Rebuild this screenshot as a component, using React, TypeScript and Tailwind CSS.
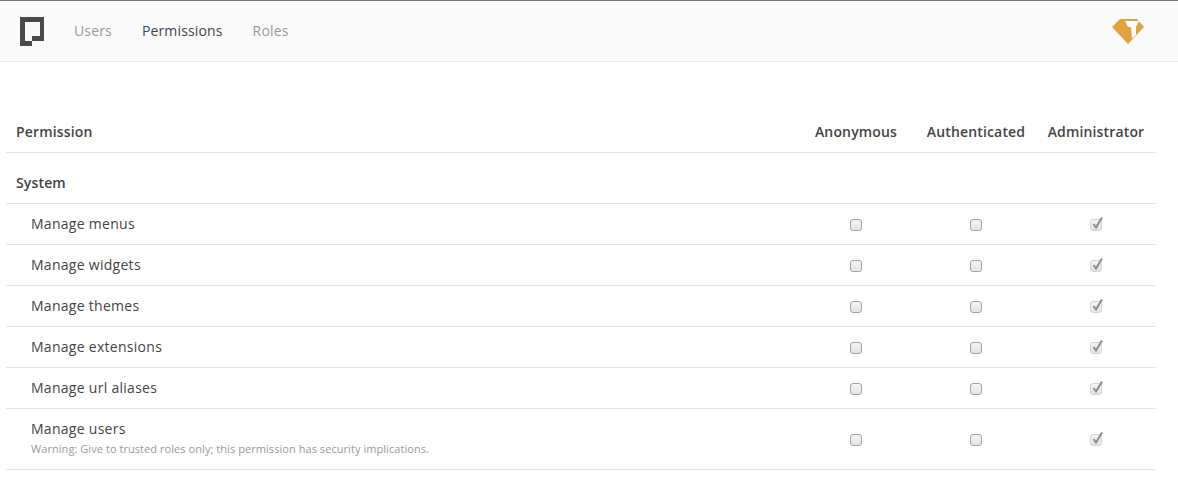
const rows = [
  { name: 'Manage menus' },
  { name: 'Manage widgets' },
  { name: 'Manage themes' },
  { name: 'Manage extensions' },
  { name: 'Manage url aliases' },
  {
    name: 'Manage users',
    note: 'Warning: Give to trusted roles only; this permission has security implications.',
  },
];

const Logo = () => (
  <svg width="24" height="29" viewBox="0 0 24 29">
    <path
      fillRule="evenodd"
      fill="#4a4a4a"
      d="M0 0H24V24H12V29H0ZM5 5V24H12V19H20V5Z"
    />
  </svg>
);

const Gem = () => (
  <svg width="32" height="26" viewBox="0 0 32 26">
    <path fill="#e1a23f" d="M8 1H25L32 9L16 26L0 9Z" />
    <path fill="#fff" d="M13 3H27L24 9V17L20 20.500L19 9H16Z" />
  </svg>
);

const Checkbox = ({ checked }: { checked?: boolean }) => (
  <span
    className={`relative block w-3 h-3 rounded-[3px] border bg-gradient-to-b from-[#f4f4f4] to-[#e4e4e4] ${
      checked ? 'border-[#d4d4d4]' : 'border-[#a3a3a3]'
    }`}
  >
    {checked && (
      <svg className="absolute left-[-1px] top-[-4px]" width="14" height="14" viewBox="0 0 14 14">
        <path d="M3.500 8L6 11.500L12 1.500" fill="none" stroke="#8c8c8c" strokeWidth="2" />
      </svg>
    )}
  </span>
);

const App = () => {
  return (
    <div className="min-h-[480px] bg-white text-sm text-[#444] font-['Open_Sans',sans-serif] overflow-hidden">
      <header className="h-[62px] flex items-center bg-[#fafafa] border-t border-t-[#777] border-b border-b-[#e8e8e8] pl-5 pr-[34px]">
        <Logo />
        <nav className="flex gap-[30px] ml-[30px] text-[#999] tracking-[0.15px]">
          <span>Users</span>
          <span className="text-[#3d4650]">Permissions</span>
          <span>Roles</span>
        </nav>
        <div className="ml-auto">
          <Gem />
        </div>
      </header>

      <main className="w-[1150px] ml-1.5 mt-[49px]">
        <div className="grid grid-cols-[1fr_120px_120px_120px] items-center h-[42px] border-b border-[#e5e5e5] font-semibold tracking-[0.15px]">
          <div className="pl-2.5">Permission</div>
          <div className="text-center">Anonymous</div>
          <div className="text-center">Authenticated</div>
          <div className="text-center">Administrator</div>
        </div>
        <div className="flex items-center h-[51px] border-b border-[#e5e5e5] pl-2.5 pt-[9px] font-semibold tracking-[0.15px]">
          System
        </div>
        {rows.map((row) => (
          <div
            key={row.name}
            className={`grid grid-cols-[1fr_120px_120px_120px] items-center border-b border-[#e5e5e5] ${
              row.note ? 'h-[61px]' : 'h-[41px]'
            }`}
          >
            <div className={`pl-[25px] ${row.note ? 'pb-[3px]' : ''}`}>
              <div className="leading-5 tracking-[0.28px]">{row.name}</div>
              {row.note && (
                <div className="mt-px text-[11px] leading-[17px] text-[#999] tracking-[0.06px]">{row.note}</div>
              )}
            </div>
            <div className="flex justify-center pt-[2px]"><Checkbox /></div>
            <div className="flex justify-center pt-[2px]"><Checkbox /></div>
            <div className="flex justify-center pt-[2px]"><Checkbox checked /></div>
          </div>
        ))}
      </main>
    </div>
  );
};

export default App;
